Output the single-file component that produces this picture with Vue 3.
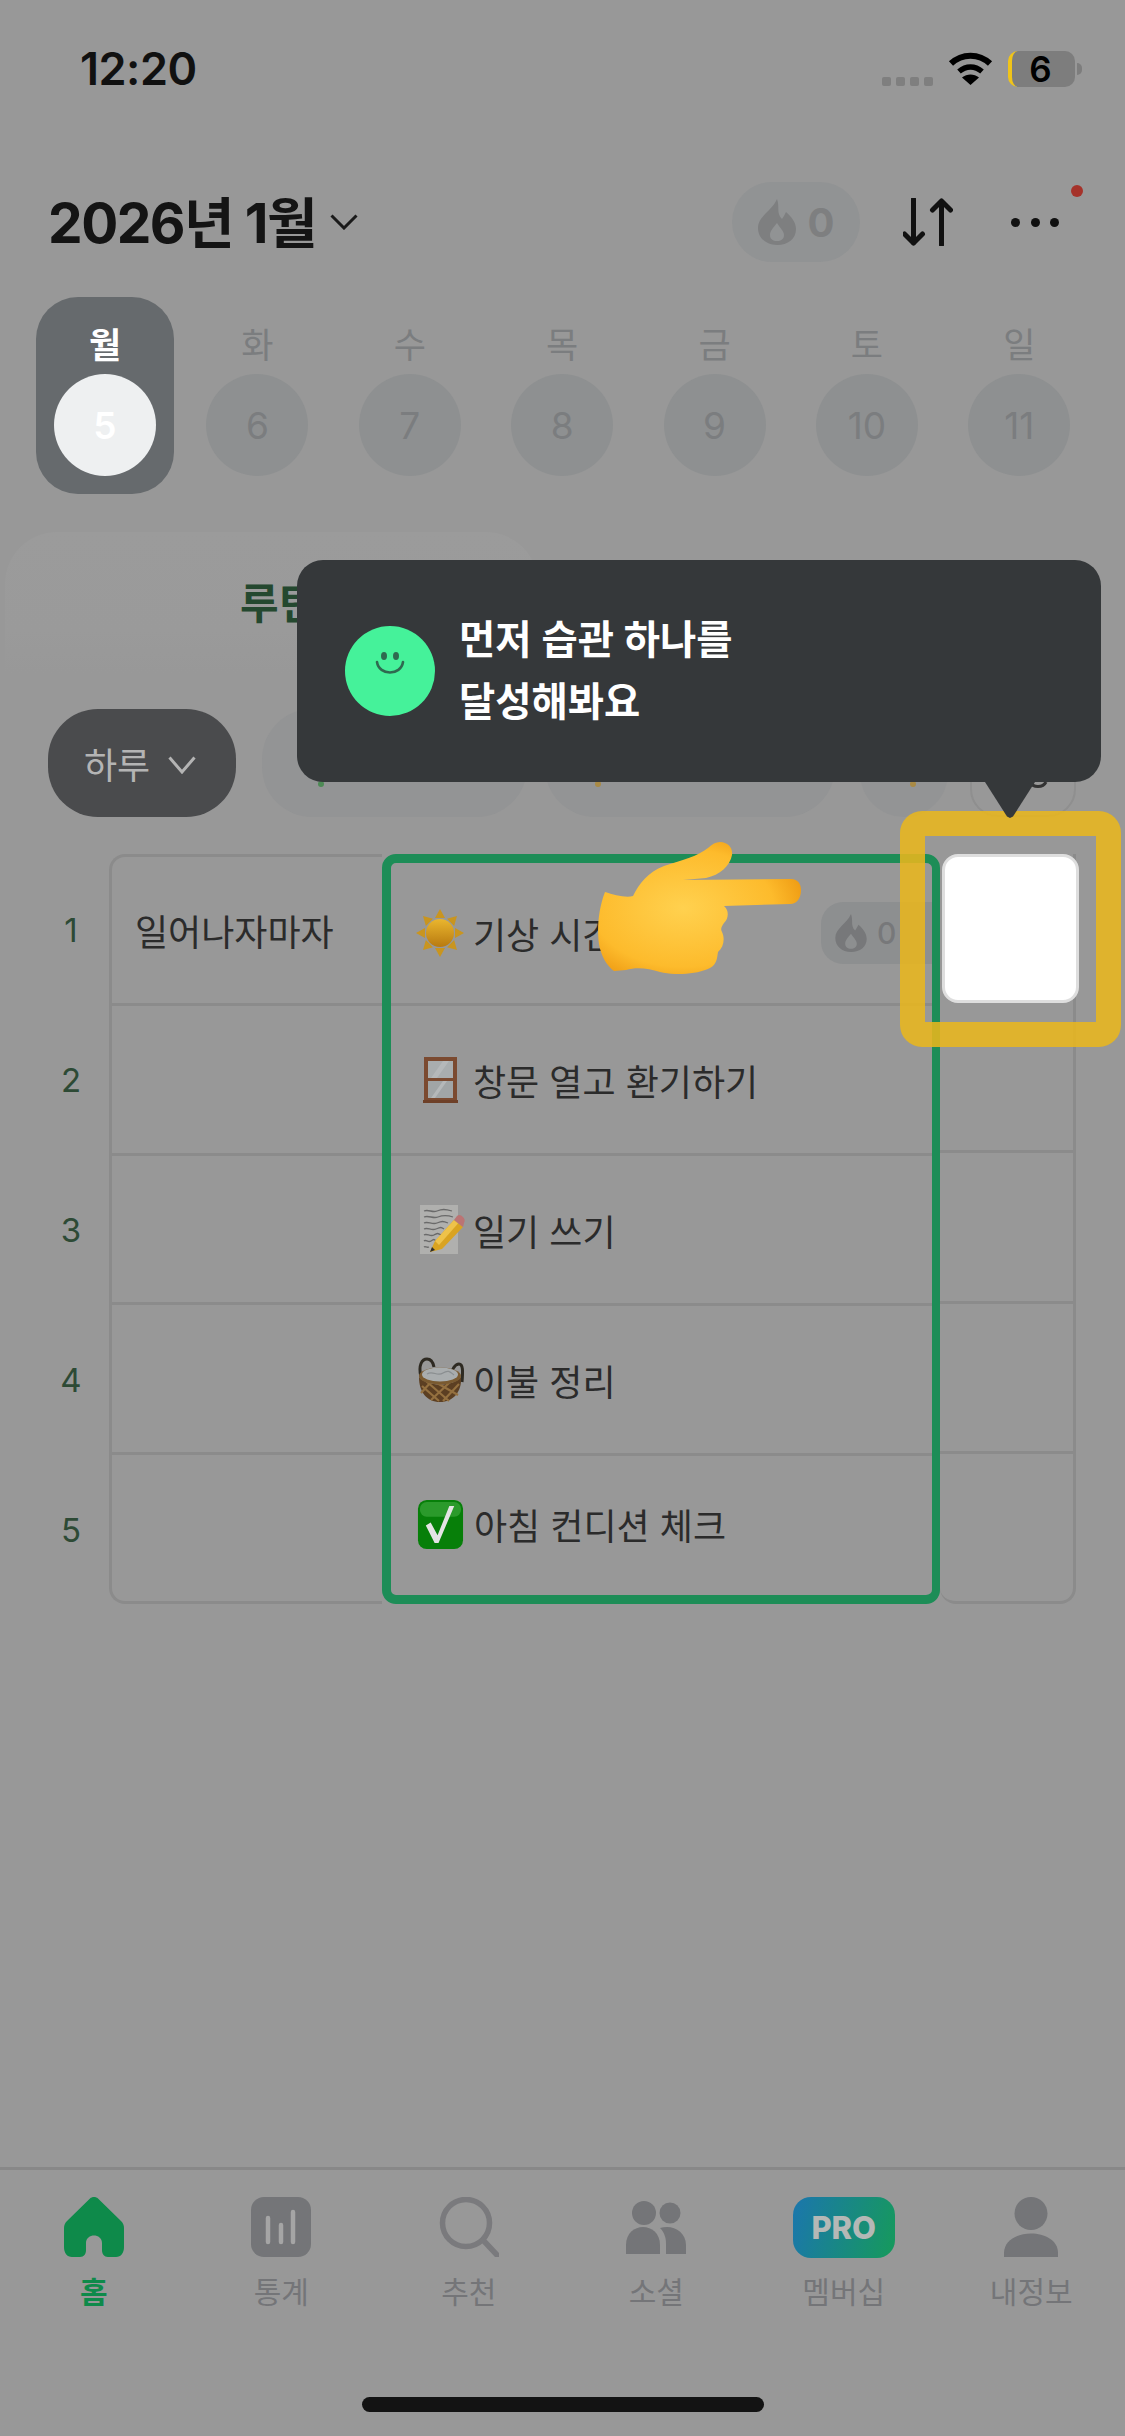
<script setup>
const days = [
  { label: '월', num: 5, on: true },
  { label: '화', num: 6 },
  { label: '수', num: 7 },
  { label: '목', num: 8 },
  { label: '금', num: 9 },
  { label: '토', num: 10 },
  { label: '일', num: 11 },
]
const navs = ['홈', '통계', '추천', '소셜', '멤버십', '내정보']
const flame = 'M19 0C22 8 18 14 24 20C26 17 27 15 28 13C34 18 38 24 38 30C38 40 30 46 19 46C8 46 0 39 0 29C0 17 14 12 19 0ZM19 24C15 29 12 32 12 36C12 40 15 42 19 42C23 42 26 40 26 36C26 32 22 29 19 24Z'
const rays = [0, 45, 90, 135, 180, 225, 270, 315]
</script>

<template>
  <div class="page">
    <div class="status">
      <span class="time">12:20</span>
      <div class="status-right">
        <div class="signal"><i></i><i></i><i></i><i></i></div>
        <svg class="wifi" viewBox="0 0 45 33">
          <path d="M3 11.5C14 1 31 1 42 11.5" fill="none" stroke="#000" stroke-width="6" />
          <path d="M11 19.5C18 13.5 27 13.5 34 19.5" fill="none" stroke="#000" stroke-width="5.5" />
          <path d="M22.5 33L14 25.5C19 21.5 26 21.5 31 25.5Z" fill="#000" />
        </svg>
        <div class="battery"><span>6</span></div>
        <i class="battery-cap"></i>
      </div>
    </div>

    <header class="header">
      <h1>2026년 1월</h1>
      <svg class="title-chev" viewBox="0 0 28 16"><path d="M1.5 1.5L14 14L26.5 1.5" fill="none" stroke="#1a1a1a" stroke-width="3" /></svg>
      <div class="streak">
        <svg viewBox="0 0 38 46"><path :d="flame" fill="#7e7f80" fill-rule="evenodd" /></svg>
        <span>0</span>
      </div>
      <svg class="sort" viewBox="0 0 50 48">
        <path d="M10.5 1V45M1.5 36L10.5 45L19.5 36" fill="none" stroke="#111" stroke-width="5" stroke-linecap="round" stroke-linejoin="round" />
        <path d="M38.5 47V3M29.5 12L38.5 3L47.5 12" fill="none" stroke="#111" stroke-width="5" stroke-linecap="round" stroke-linejoin="round" />
      </svg>
      <div class="more"><i></i><i></i><i></i><b></b></div>
    </header>

    <div class="week">
      <div v-for="d in days" :key="d.num" class="day" :class="{ on: d.on }">
        <span class="day-label">{{ d.label }}</span>
        <span class="day-num">{{ d.num }}</span>
      </div>
    </div>

    <div class="tabs">
      <div class="tab">루틴</div>
    </div>

    <div class="chips">
      <div class="chip chip-main">하루
        <svg viewBox="0 0 28 18"><path d="M1.5 1.5L14 16L26.5 1.5" fill="none" stroke="#b4b4b4" stroke-width="3" /></svg>
      </div>
      <div class="chip chip-a"><i class="peek green"></i></div>
      <div class="chip chip-b"><i class="peek amber"></i></div>
      <div class="chip chip-c"><i class="peek amber"></i></div>
      <div class="chip chip-d">
        <svg viewBox="0 0 20 8"><path d="M2 1C5 7 15 7 18 1" fill="none" stroke="#333" stroke-width="3" /></svg>
      </div>
    </div>

    <div class="table">
      <div class="nums">
        <span v-for="n in 5" :key="n">{{ n }}</span>
      </div>
      <div class="col-name">
        <div class="name-cell">일어나자마자</div>
        <div class="name-cell"></div>
        <div class="name-cell"></div>
        <div class="name-cell"></div>
        <div class="name-cell"></div>
      </div>
      <div class="col-habit">
        <div class="habit">
          <svg class="emoji" viewBox="0 0 46 46">
            <defs>
              <linearGradient id="sunBody" x1="0" y1="0" x2="0" y2="1">
                <stop offset="0" stop-color="#eab62e" />
                <stop offset="1" stop-color="#b87a10" />
              </linearGradient>
            </defs>
            <path v-for="r in rays" :key="r" d="M18 8L23 -1L28 8Z" fill="#c9951f" :transform="`rotate(${r} 23 23)`" />
            <circle cx="23" cy="23" r="14" fill="url(#sunBody)" />
          </svg>
          <span>기상 시간</span>
          <div class="mini-streak">
            <svg viewBox="0 0 38 46"><path :d="flame" fill="#77787a" fill-rule="evenodd" /></svg>
            <span>0</span>
          </div>
        </div>
        <div class="habit">
          <svg class="emoji" viewBox="0 0 46 46">
            <rect x="7" y="0" width="33" height="45" fill="#7b4a30" />
            <rect x="6" y="43" width="35" height="3" fill="#6e4028" />
            <rect x="11" y="4" width="25" height="17" fill="#a9adae" />
            <rect x="11" y="24" width="25" height="17" fill="#a1a5a6" />
            <path d="M14 21L26 4H32L20 21ZM14 41L26 24H30L18 41Z" fill="#b5b8b9" />
          </svg>
          <span>창문 열고 환기하기</span>
        </div>
        <div class="habit">
          <svg class="emoji emoji-tall" viewBox="0 0 46 50">
            <rect x="3" y="0" width="38" height="49" fill="#b0b0ae" />
            <path d="M7 6C12 4 15 8 20 6S28 4 35 6M7 12C12 10 16 14 21 12S30 10 36 12M7 18C11 16 15 20 20 18S26 16 31 18M7 24C11 22 14 26 19 24S24 22 27 24M7 30C10 28 13 32 17 30S20 28 24 30M7 36C9 34 11 38 14 36S17 34 19 36M7 42C8 41 10 43 12 42" fill="none" stroke="#6a6a6a" stroke-width="1.300" />
            <path d="M37 15L46 22L25 44L13 47L18 36Z" fill="#d9a321" />
            <path d="M18 36L37 15L41 18.500L22 40Z" fill="#eec24a" />
            <path d="M37 15L40 11C42 9 44 10 46 12C48 14 48 16 47 18L46 22Z" fill="#bb7474" />
            <path d="M13 47L15 42L18 45Z" fill="#2e2e2e" />
          </svg>
          <span>일기 쓰기</span>
        </div>
        <div class="habit">
          <svg class="emoji" viewBox="0 0 46 46">
            <path d="M4 20C1 8 5 2 10 2C14 2 16 5 17 10M33 21C35 12 38 7 42 7C46 7 46 14 45 25" fill="none" stroke="#2e2a22" stroke-width="3" />
            <path d="M2 20C10 30 36 30 44 20C45 35 36 45 23 45C10 45 2 35 2 20Z" fill="#5c3f22" />
            <path d="M5 29L22 44M9 24L32 44M20 26L41 38M32 26L14 43M42 27L26 44M14 25L4 36" stroke="#94703f" stroke-width="2.200" />
            <ellipse cx="23" cy="19" rx="21" ry="8.500" fill="#7a5a30" />
            <ellipse cx="23" cy="17.500" rx="18" ry="7" fill="#a9adae" />
            <path d="M10 17C16 13 20 20 26 16S34 16 37 18" fill="none" stroke="#8a8e90" stroke-width="1.200" />
          </svg>
          <span>이불 정리</span>
        </div>
        <div class="habit">
          <svg class="emoji emoji-check" viewBox="0 0 46 50">
            <rect x="0" y="0" width="46" height="50" rx="9" fill="#077f09" />
            <rect x="2" y="2" width="42" height="15" rx="7" fill="#2b9a2b" />
            <path d="M8 26L13 23L20 36L32 6H37L21 44H17Z" fill="#e4e4e4" />
          </svg>
          <span>아침 컨디션 체크</span>
        </div>
      </div>
      <div class="col-check">
        <div class="check-cell check-first"></div>
        <div class="check-cell"></div>
        <div class="check-cell"></div>
        <div class="check-cell"></div>
        <div class="check-cell"></div>
      </div>
    </div>

    <nav class="nav">
      <div v-for="(n, i) in navs" :key="n" class="nav-item" :class="{ active: i === 0 }">
        <svg v-if="i === 0" class="nav-icon" viewBox="0 0 60 60">
          <path d="M26 1.500C28 -0.500 32 -0.500 34 1.500L57 24C59 26 60 28 60 31V50C60 56 57 60 52 60H44C40 60 38 57 38 53V46C38 36 22 36 22 46V53C22 57 20 60 16 60H8C3 60 0 56 0 50V31C0 28 1 26 3 24Z" fill="#0e8a4a" />
        </svg>
        <svg v-else-if="i === 1" class="nav-icon" viewBox="0 0 60 60">
          <rect width="60" height="60" rx="13" fill="#747578" />
          <path d="M17 21V45M30 28V45M42 15V45" stroke="#a5a5a5" stroke-width="4.500" stroke-linecap="round" />
        </svg>
        <svg v-else-if="i === 2" class="nav-icon" viewBox="0 0 60 60">
          <circle cx="27" cy="26" r="23.500" fill="none" stroke="#7a7a7d" stroke-width="5.500" />
          <path d="M44 43L58 58" stroke="#7a7a7d" stroke-width="5.500" stroke-linecap="round" />
        </svg>
        <svg v-else-if="i === 3" class="nav-icon" viewBox="0 0 60 60">
          <circle cx="18" cy="16" r="12" fill="#747578" />
          <circle cx="44" cy="16" r="10.500" fill="#747578" />
          <path d="M0 57V48C0 24 34 24 34 48V57Z" fill="#747578" />
          <path d="M40 57V47C40 40 38 35 34 31C46 27 60 34 60 48V57Z" fill="#747578" />
        </svg>
        <div v-else-if="i === 4" class="pro">PRO</div>
        <svg v-else class="nav-icon" viewBox="0 0 60 60">
          <circle cx="30" cy="16.500" r="16.500" fill="#747578" />
          <path d="M3 60V56C3 30 57 30 57 56V60Z" fill="#747578" />
        </svg>
        <span>{{ n }}</span>
      </div>
    </nav>

    <div class="home-bar"></div>

    <div class="highlight"></div>

    <div class="tooltip">
      <div class="smile">
        <svg viewBox="0 0 90 90">
          <ellipse cx="39" cy="30" rx="3" ry="4" fill="#2f6a50" />
          <ellipse cx="51" cy="30" rx="3" ry="4" fill="#2f6a50" />
          <path d="M32 36C34 50 56 50 58 36" fill="none" stroke="#2f6a50" stroke-width="2.600" stroke-linecap="round" />
        </svg>
      </div>
      <p>먼저 습관 하나를<br />달성해봐요</p>
      <i class="tooltip-arrow"></i>
    </div>

    <svg class="hand" viewBox="0 0 203 132">
      <defs>
        <radialGradient id="handFill" cx="0.42" cy="0.5" r="0.62">
          <stop offset="0" stop-color="#ffd14f" />
          <stop offset="0.72" stop-color="#fdbb2c" />
          <stop offset="1" stop-color="#ee9a12" />
        </radialGradient>
      </defs>
      <path d="M122 0C130 0 135 6 134 13C132 24 122 33 108 36L85 38L193 37C200 37 203 42 203 48C203 56 199 62 192 62L126 64C131 68 131 76 126 81C124 84 122 87 124 90C127 96 126 105 120 110C119 116 119 122 112 126C100 132 78 134 62 130C50 126 38 125 28 128L16 129C9 124 3 114 1 102C-1 88 0 68 7 50C16 53 28 56 35 54C41 42 50 30 66 24C85 18 100 14 110 6C114 2 118 0 122 0Z" fill="url(#handFill)" />
    </svg>
  </div>
</template>

<style scoped>
.page {
  position: relative;
  width: 1125px;
  height: 2436px;
  overflow: hidden;
  display: flex;
  flex-direction: column;
  background: #989898;
  color: #111;
  font-family: "Inter", "Noto Sans CJK KR", sans-serif;
}
.status {
  flex: none;
  height: 182px;
  padding: 47px 43px 0 80px;
  box-sizing: border-box;
  display: flex;
  justify-content: space-between;
  align-items: flex-start;
}
.time {
  font-size: 45px;
  line-height: 44px;
  font-weight: 600;
  letter-spacing: -0.5px;
}
.status-right {
  display: flex;
  align-items: flex-start;
  margin-top: 4px;
}
.signal {
  display: flex;
  gap: 5px;
  margin-top: 26px;
  margin-right: 15px;
}
.signal i {
  width: 9px;
  height: 9px;
  border-radius: 2px;
  background: #7f7f7f;
}
.wifi {
  width: 45px;
  height: 33px;
  margin-top: 1px;
  margin-right: 15px;
}
.battery {
  width: 67px;
  height: 36px;
  box-sizing: border-box;
  border-left: 4px solid #f0c419;
  border-radius: 10px;
  background: #7d7d7d;
  display: flex;
  align-items: center;
  justify-content: center;
  font-size: 35px;
  font-weight: 600;
  color: #000;
}
.battery span {
  margin-right: 6px;
}
.battery-cap {
  width: 5px;
  height: 12px;
  margin: 12px 0 0 2px;
  border-radius: 0 6px 6px 0;
  background: #7d7d7d;
}
.header {
  flex: none;
  height: 80px;
  padding-left: 48px;
  display: flex;
  align-items: center;
}
h1 {
  margin: 0 0 6px;
  font-size: 55px;
  font-weight: 700;
  letter-spacing: -1.500px;
  color: #141414;
}
.title-chev {
  width: 28px;
  height: 16px;
  margin: 0 0 0 14px;
}
.streak {
  margin-left: auto;
  width: 128px;
  height: 80px;
  border-radius: 40px;
  background: #919394;
  display: flex;
  align-items: center;
  justify-content: center;
  gap: 12px;
  font-size: 40px;
  font-weight: 700;
  color: #7e7f80;
}
.streak svg {
  width: 38px;
  height: 46px;
}
.sort {
  width: 50px;
  height: 48px;
  margin-left: 43px;
}
.more {
  position: relative;
  width: 66px;
  margin: 0 48px 0 58px;
  display: flex;
  gap: 10.500px;
}
.more i {
  width: 9px;
  height: 9px;
  border-radius: 50%;
  background: #111;
}
.more b {
  position: absolute;
  left: 60px;
  top: -33px;
  width: 12px;
  height: 12px;
  border-radius: 50%;
  background: #a5322a;
}
.week {
  flex: none;
  margin-top: 35px;
  padding-left: 36px;
  display: flex;
  gap: 14.400px;
}
.day {
  width: 138px;
  height: 197px;
  padding-top: 22px;
  box-sizing: border-box;
  border-radius: 42px;
  display: flex;
  flex-direction: column;
  align-items: center;
}
.day.on {
  background: #666a6d;
}
.day-label {
  height: 52px;
  line-height: 52px;
  font-size: 35px;
  color: #7b7d7f;
}
.on .day-label {
  color: #fff;
  font-weight: 700;
}
.day-num {
  width: 102px;
  height: 102px;
  margin-top: 3px;
  border-radius: 50%;
  background: #8e9091;
  display: flex;
  align-items: center;
  justify-content: center;
  font-size: 37px;
  color: #7b7d7f;
}
.on .day-num {
  background: #eef0f1;
  color: #fff;
  font-weight: 600;
}
.tabs {
  flex: none;
  height: 177px;
  margin-top: 38px;
  padding-left: 5px;
  box-sizing: border-box;
}
.tab {
  width: 533px;
  height: 141px;
  box-sizing: border-box;
  padding: 46px 0 0 235px;
  border-radius: 52px 52px 0 0;
  background: linear-gradient(#9b9b9b, #9a9a9a 70%, #989898);
  font-size: 42px;
  line-height: 52px;
  font-weight: 700;
  color: #24482f;
}
.chips {
  flex: none;
  height: 108px;
  padding-left: 48px;
  display: flex;
}
.chip {
  flex: none;
  position: relative;
  box-sizing: border-box;
  height: 108px;
  border-radius: 50px;
  background: #939495;
}
.chip-main {
  width: 188px;
  background: #4a4b4d;
  color: #b4b4b4;
  font-size: 36px;
  display: flex;
  align-items: center;
  padding-left: 36px;
  gap: 18px;
}
.chip-main svg {
  width: 28px;
  height: 18px;
  margin-top: 4px;
}
.chip-a {
  width: 265px;
  margin-left: 26px;
}
.chip-b {
  width: 290px;
  margin-left: 18px;
}
.chip-c {
  width: 88px;
  margin-left: 25px;
}
.chip-d {
  width: 106px;
  margin-left: 22px;
  background: none;
  border: 2px solid #8f8f8f;
  border-radius: 28px;
}
.chip-d svg {
  position: absolute;
  left: 56px;
  top: 70px;
  width: 20px;
  height: 8px;
}
.peek {
  position: absolute;
  left: 56px;
  top: 72px;
  width: 6px;
  height: 6px;
  border-radius: 50%;
}
.peek.green {
  background: #4d8a55;
}
.peek.amber {
  left: 50px;
  background: #a98a45;
}
.table {
  flex: none;
  height: 750px;
  margin-top: 37px;
  display: flex;
}
.nums {
  flex: none;
  width: 109px;
  padding-left: 33px;
  box-sizing: border-box;
  display: flex;
  flex-direction: column;
  color: #2d4a35;
  font-size: 33px;
  text-align: center;
}
.nums span {
  width: 76px;
  height: 150px;
  line-height: 152px;
}
.col-name {
  flex: none;
  width: 273px;
  box-sizing: border-box;
  border: 3px solid #8b8b8b;
  border-right: 0;
  border-radius: 16px 0 0 16px;
  display: flex;
  flex-direction: column;
}
.name-cell {
  flex: 1;
  padding-left: 23px;
  display: flex;
  align-items: center;
  font-size: 36px;
  color: #2b2b2b;
  border-bottom: 3px solid #8b8b8b;
}
.name-cell:last-child {
  border-bottom: 0;
}
.col-habit {
  flex: none;
  width: 558px;
  box-sizing: border-box;
  border: solid #1d8d57;
  border-width: 9px 8px 9px 9px;
  border-radius: 14px;
  display: flex;
  flex-direction: column;
}
.habit {
  flex: none;
  height: 150px;
  box-sizing: border-box;
  padding-left: 26px;
  display: flex;
  align-items: center;
  gap: 10px;
  font-size: 36px;
  color: #2b2b2b;
  border-bottom: 3px solid #8b8b8b;
}
.habit:first-child {
  height: 143px;
}
.habit:last-child {
  height: 136px;
  border-bottom: 0;
}
.emoji {
  flex: none;
  width: 46px;
  height: 46px;
  overflow: visible;
}
.emoji-tall {
  height: 50px;
}
.emoji-check {
  height: 49px;
  width: 47px;
}
.mini-streak {
  margin-left: auto;
  width: 111px;
  height: 62px;
  padding-left: 14px;
  box-sizing: border-box;
  border-radius: 22px 0 0 22px;
  background: #8d8f90;
  display: flex;
  align-items: center;
  gap: 10px;
  font-size: 30px;
  font-weight: 500;
  color: #77787a;
}
.mini-streak svg {
  width: 32px;
  height: 38px;
}
.col-check {
  flex: none;
  width: 136px;
  box-sizing: border-box;
  border: solid #8b8b8b;
  border-width: 0 3px 3px 0;
  border-radius: 0 0 16px 16px;
  display: flex;
  flex-direction: column;
}
.check-cell {
  flex: 1;
  border-bottom: 3px solid #8b8b8b;
}
.check-cell:last-child {
  border-bottom: 0;
}
.check-first {
  flex: none;
  width: 137px;
  height: 149px;
  margin-left: 2px;
  box-sizing: border-box;
  background: #fff;
  border: 3px solid #dedede;
  border-radius: 16px;
}
.nav {
  flex: none;
  margin-top: auto;
  height: 269px;
  box-sizing: border-box;
  padding-top: 27px;
  border-top: 3px solid #888;
  display: flex;
}
.nav-item {
  width: 187.500px;
  display: flex;
  flex-direction: column;
  align-items: center;
  font-size: 30px;
  color: #747578;
}
.nav-item.active {
  color: #0e8a4a;
  font-weight: 600;
}
.nav-item span {
  margin-top: 13px;
  line-height: 44px;
}
.nav-icon {
  flex: none;
  width: 60px;
  height: 60px;
}
.pro {
  flex: none;
  width: 102px;
  height: 61px;
  margin-bottom: -1px;
  border-radius: 18px;
  background: linear-gradient(105deg, #1b76ad, #169a5b);
  display: flex;
  align-items: center;
  justify-content: center;
  font-size: 31px;
  font-weight: 800;
  color: #b4b8b6;
}
.home-bar {
  position: absolute;
  left: 362px;
  top: 2397px;
  width: 402px;
  height: 15px;
  border-radius: 8px;
  background: #131313;
}
.highlight {
  position: absolute;
  left: 900px;
  top: 811px;
  width: 221px;
  height: 236px;
  box-sizing: border-box;
  border: 25px solid rgba(232, 182, 30, 0.88);
  border-radius: 22px;
}
.tooltip {
  position: absolute;
  left: 297px;
  top: 560px;
  width: 804px;
  height: 222px;
  box-sizing: border-box;
  padding-left: 48px;
  border-radius: 26px;
  background: #35383a;
  display: flex;
  align-items: center;
  gap: 24px;
  color: #fff;
}
.tooltip p {
  margin: 0;
  font-size: 39.400px;
  line-height: 62px;
  font-weight: 600;
}
.smile {
  flex: none;
  width: 90px;
  height: 90px;
  border-radius: 50%;
  background: #45f29a;
}
.smile svg {
  display: block;
  width: 90px;
  height: 90px;
}
.tooltip-arrow {
  position: absolute;
  left: 688px;
  top: 222px;
  width: 50px;
  height: 36px;
  background: #35383a;
  clip-path: polygon(0 0, 100% 0, 56% 96%, 50% 100%, 44% 96%);
}
.hand {
  position: absolute;
  left: 598px;
  top: 842px;
  width: 203px;
  height: 132px;
}
</style>

<style>
html, body {
  margin: 0;
  background: #989898;
}
</style>
